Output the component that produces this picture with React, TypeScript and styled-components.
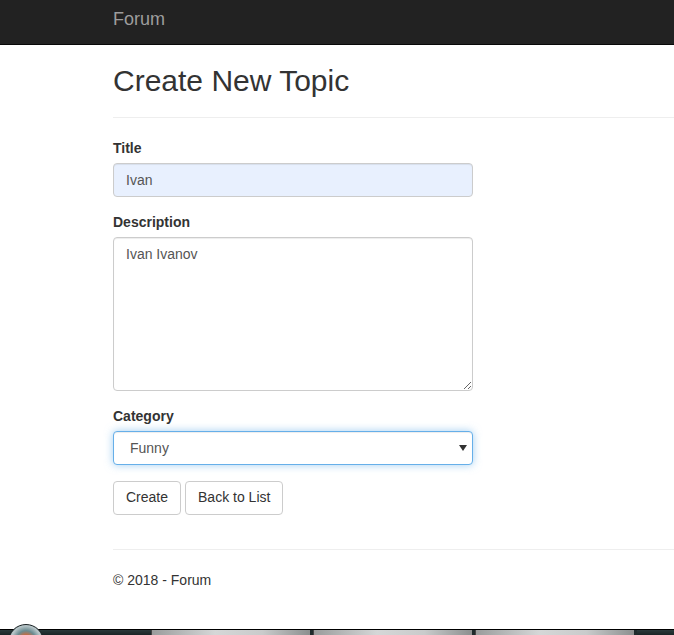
import React from "react";
import styled, { createGlobalStyle } from "styled-components";

const Global = createGlobalStyle`
  html, body { margin: 0; padding: 0; background: #fff; }
  body {
    font-family: "Liberation Sans", Arial, Helvetica, sans-serif;
    font-size: 14px;
    line-height: 1.428571;
    color: #333;
  }
  * { box-sizing: border-box; }
`;

const Page = styled.div`
  height: 635px;
  display: flex;
  flex-direction: column;
  overflow: hidden;
`;

const Navbar = styled.header`
  height: 45px;
  background: #222;
  border-bottom: 1px solid #080808;
  display: flex;
  align-items: center;
  padding-left: 113px;
  flex-shrink: 0;
`;

const Brand = styled.a`
  color: #9d9d9d;
  font-size: 18px;
  line-height: 20px;
  text-decoration: none;
  margin-top: -6px;
`;

const Container = styled.main`
  padding-left: 113px;
  flex: 1;
`;

const Heading = styled.h2`
  font-size: 30px;
  font-weight: 500;
  line-height: 1.1;
  margin: 19px 0 10px;
  color: #333;
`;

const Rule = styled.hr`
  border: 0;
  border-top: 1px solid #eee;
  margin: 20px 0;
`;

const FormGroup = styled.div`
  margin-bottom: 15px;
  width: 360px;
`;

const Label = styled.label`
  display: block;
  font-weight: 700;
  margin-bottom: 5px;
  line-height: 20px;
`;

const Input = styled.input<{ $autofill?: boolean }>`
  display: block;
  width: 100%;
  height: 34px;
  padding: 6px 12px;
  font: inherit;
  color: #555;
  background: ${(p) => (p.$autofill ? "#e8f0fe" : "#fff")};
  border: 1px solid #ccc;
  border-radius: 4px;
  box-shadow: inset 0 1px 1px rgba(0, 0, 0, 0.075);
  outline: none;
`;

const TextArea = styled.textarea`
  display: block;
  width: 100%;
  height: 154px;
  padding: 7px 12px 6px;
  font: inherit;
  color: #555;
  background: #fff;
  border: 1px solid #ccc;
  border-radius: 4px;
  box-shadow: inset 0 1px 1px rgba(0, 0, 0, 0.075);
  outline: none;
  resize: vertical;
`;

const SelectWrap = styled.div`
  position: relative;
`;

const Select = styled.select`
  display: block;
  width: 100%;
  height: 34px;
  padding: 7px 12px 5px 16px;
  font: inherit;
  color: #555;
  background: #fff;
  border: 1px solid #66afe9;
  border-radius: 4px;
  box-shadow: inset 0 1px 1px rgba(0, 0, 0, 0.075),
    0 0 8px rgba(102, 175, 233, 0.6);
  outline: none;
  appearance: none;
  -webkit-appearance: none;
`;

const Caret = styled.svg`
  position: absolute;
  right: 6px;
  top: 14px;
  pointer-events: none;
`;

const Actions = styled.div`
  display: flex;
  gap: 4px;
  margin-top: 16px;
`;

const Button = styled.button`
  height: 34px;
  padding: 6px 12px;
  font: inherit;
  color: #333;
  background: #fff;
  border: 1px solid #ccc;
  border-radius: 4px;
  cursor: pointer;
`;

const Footer = styled.footer`
  margin-top: 34px;
`;

const FooterRule = styled.hr`
  border: 0;
  border-top: 1px solid #eee;
  margin: 20px 0;
`;

const FooterText = styled.p`
  margin: 0;
  line-height: 20px;
`;

const Taskbar = styled.div`
  height: 6px;
  display: flex;
  background: #1e2b2c;
  border-top: 1px solid #000;
  flex-shrink: 0;
  position: relative;
`;

const TaskGap = styled.div<{ $w: number }>`
  width: ${(p) => p.$w}px;
  flex-shrink: 0;
  background: linear-gradient(#2a3a3b, #1a2627);
  position: relative;
`;

const TaskButton = styled.div`
  width: 159px;
  flex-shrink: 0;
  margin-right: 3px;
  background: linear-gradient(90deg, #9a9c9c, #d5d7d7 40%, #c9cbcb 70%, #8c8f8f);
  border-left: 1px solid #444;
`;

const Orb = styled.div`
  position: absolute;
  left: 8px;
  top: -6px;
  width: 36px;
  height: 36px;
  border-radius: 50%;
  background: radial-gradient(circle at 50% 45%, #e0622a 0 16%, #6a8a90 38%, #b9c6c9 58%, #4b6468 100%);
  border: 1px solid #1a2224;
`;

export default function App() {
  return (
    <Page>
      <Global />
      <Navbar>
        <Brand href="#">Forum</Brand>
      </Navbar>
      <Container>
        <Heading>Create New Topic</Heading>
        <Rule />
        <form onSubmit={(e) => e.preventDefault()}>
          <FormGroup>
            <Label htmlFor="title">Title</Label>
            <Input id="title" $autofill defaultValue="Ivan" />
          </FormGroup>
          <FormGroup>
            <Label htmlFor="desc">Description</Label>
            <TextArea id="desc" defaultValue="Ivan Ivanov" />
          </FormGroup>
          <FormGroup>
            <Label htmlFor="cat">Category</Label>
            <SelectWrap>
              <Select id="cat" defaultValue="Funny">
                <option>Funny</option>
                <option>Serious</option>
              </Select>
              <Caret width="8" height="6" viewBox="0 0 8 6">
                <path d="M0 0 H8 L4 6 Z" fill="#333" />
              </Caret>
            </SelectWrap>
          </FormGroup>
          <Actions>
            <Button type="submit">Create</Button>
            <Button type="button">Back to List</Button>
          </Actions>
        </form>
        <Footer>
          <FooterRule />
          <FooterText>© 2018 - Forum</FooterText>
        </Footer>
      </Container>
      <Taskbar>
        <TaskGap $w={151}>
          <Orb />
        </TaskGap>
        <TaskButton />
        <TaskButton />
        <TaskButton />
        <TaskGap $w={40} />
      </Taskbar>
    </Page>
  );
}
